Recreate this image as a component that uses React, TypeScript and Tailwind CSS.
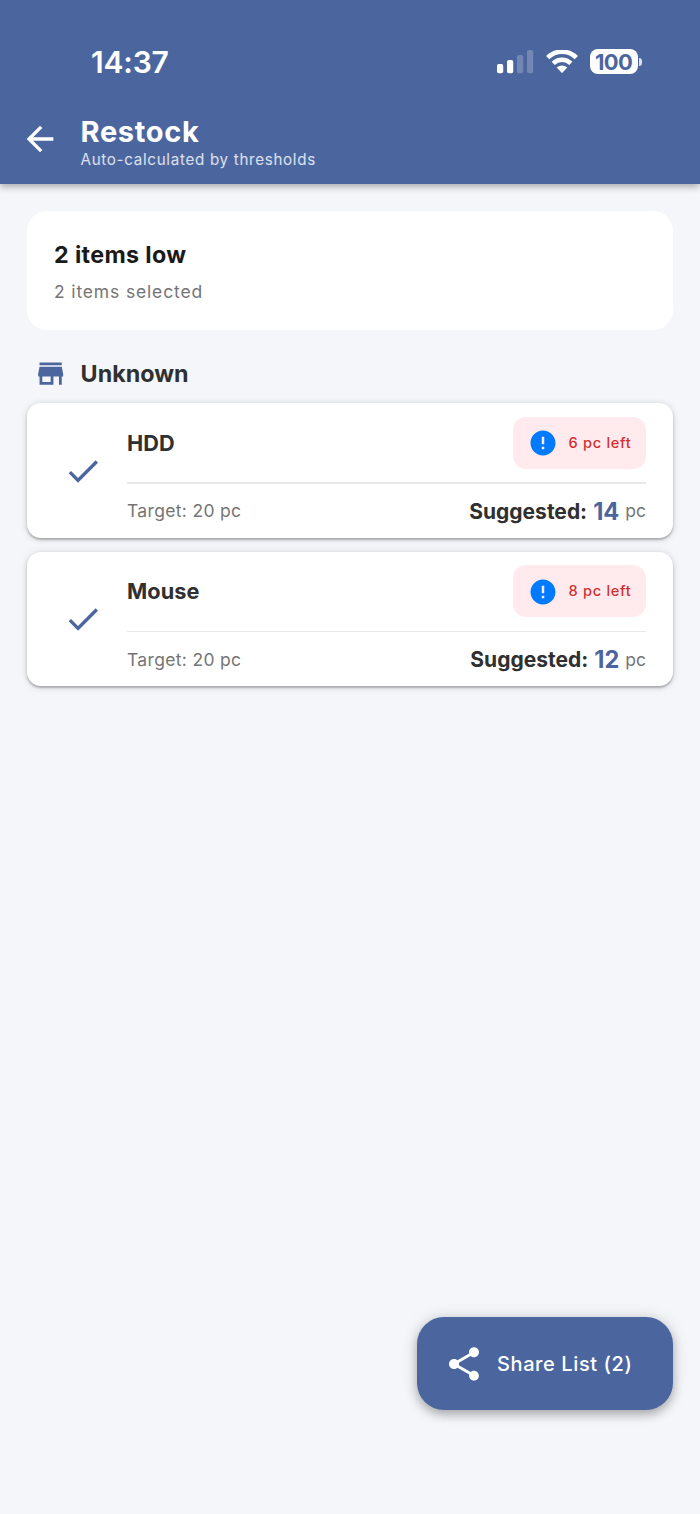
import { MdArrowBack, MdCheck, MdError, MdShare, MdStore } from "react-icons/md";

type Item = { name: string; left: number; target: number; suggested: number };

const ITEMS: Item[] = [
  { name: "HDD", left: 6, target: 20, suggested: 14 },
  { name: "Mouse", left: 8, target: 20, suggested: 12 },
];

function StatusBar() {
  return (
    <div className="flex h-[123px] items-center justify-between pl-[91px] pr-[58px] text-white">
      <span className="text-[30px] font-semibold leading-none tracking-[-0.2px]">14:37</span>
      <div className="flex items-center">
        {/* signal, two of four bars */}
        <svg width="37" height="24" viewBox="0 0 37 24" fill="currentColor">
          <rect x="0" y="14" width="6.2" height="9.3" rx="1.8" />
          <rect x="10" y="10" width="6.2" height="13.3" rx="1.8" />
          <rect x="20" y="5" width="6.2" height="18.3" rx="1.8" opacity="0.22" />
          <rect x="30" y="0" width="6.2" height="23.3" rx="1.8" opacity="0.22" />
        </svg>
        <svg className="ml-[12px]" width="32" height="24" viewBox="0 0 32 24" fill="none" stroke="currentColor" strokeWidth="4.6">
          <path d="M1.7 7.6 A20.4 20.4 0 0 1 30.3 7.6" />
          <path d="M7.2 13.4 A12.6 12.6 0 0 1 24.8 13.4" />
          <path d="M10.7 17.6 A7.6 7.6 0 0 1 21.3 17.6 L16.6 22.6 Q16 23.1 15.4 22.6 Z" fill="currentColor" stroke="none" />
        </svg>
        <div className="ml-[12px] flex h-[25px] w-[48px] items-center justify-center rounded-[8px] bg-white pr-px text-[22px] font-bold leading-none tracking-[-0.7px] text-[#4b669f]">
          100
        </div>
        <div className="ml-px h-[8px] w-[3px] rounded-r-full bg-white/80" />
      </div>
    </div>
  );
}

function ItemCard({ item }: { item: Item }) {
  return (
    <div className="flex h-[134.8px] rounded-[14px] bg-white pr-[27px] shadow-[0_2px_2px_rgba(0,0,0,0.22),0_1px_7px_rgba(0,0,0,0.18)]">
      <div className="flex w-[100px] shrink-0 items-center pl-[36.3px]">
        <MdCheck size={40} color="#4b669f" />
      </div>
      <div className="flex flex-1 flex-col">
        <div className="flex h-[79px] items-center justify-between">
          <span className="pt-px text-[21.7px] font-bold tracking-[0.1px] text-[#303030]">{item.name}</span>
          <div className="flex h-[52px] w-[133px] items-center rounded-[13px] bg-[#ffebee] pl-[15px] pt-px">
            <MdError size={30} color="#007aff" />
            <span className="ml-[10.5px] whitespace-nowrap pt-px text-[14.6px] font-medium tracking-[0.7px] text-[#d32f2f]">{item.left} pc left</span>
          </div>
        </div>
        <div className="h-[1.7px] bg-[#e8e8e8]" />
        <div className="flex h-[54px] items-center justify-between pt-px">
          <span className="text-[17.5px] tracking-[0.33px] text-[#757575]">Target: {item.target} pc</span>
          <div className="flex items-center">
            <span className="text-[21px] font-bold text-[#303030]">Suggested:</span>
            <span className="ml-[6px] text-[23.6px] font-bold text-[#4b669f]">{item.suggested}</span>
            <span className="ml-[6px] text-[17.5px] text-[#757575]">pc</span>
          </div>
        </div>
      </div>
    </div>
  );
}

export default function App() {
  return (
    <div className="relative flex h-[1514px] w-[700px] flex-col overflow-hidden bg-[#f4f6fa] font-['Inter','Liberation_Sans',sans-serif]">
      <header className="h-[183.5px] shrink-0 bg-[#4b669f] shadow-[0_3px_7px_rgba(0,0,0,0.3)]">
        <StatusBar />
        <div className="flex pl-[20px] text-white">
          <MdArrowBack size={40} className="-mt-[4px]" />
          <div className="ml-[20.5px] flex flex-col">
            <h1 className="-mt-[6px] text-[29px] font-bold leading-[30px] tracking-[0.7px]">Restock</h1>
            <p className="mt-[3.5px] text-[15.2px] leading-[18px] tracking-[0.68px] text-white/80">Auto-calculated by thresholds</p>
          </div>
        </div>
      </header>

      <main className="flex flex-col px-[27px] pt-[27.5px]">
        <section className="h-[119px] rounded-[20px] bg-white pl-[27px] pt-[30px]">
          <h2 className="text-[23.3px] font-bold leading-[28px] tracking-[0.35px] text-[#1a1a1a]">2 items low</h2>
          <p className="mt-[12px] text-[17.5px] leading-[22px] tracking-[0.85px] text-[#757575]">2 items selected</p>
        </section>

        <div className="flex h-[73.4px] items-center pl-[6.5px] pt-[14.4px]">
          <MdStore size={33.3} color="#4b669f" />
          <h3 className="ml-[13.8px] pt-px text-[23.3px] font-bold text-[#303030]">Unknown</h3>
        </div>

        <div className="flex flex-col gap-[13.4px]">
          {ITEMS.map((item) => (
            <ItemCard key={item.name} item={item} />
          ))}
        </div>
      </main>

      <button
        type="button"
        className="absolute right-[27px] bottom-[104px] flex h-[93px] w-[256px] items-center rounded-[27px] bg-[#4b669f] pl-[27px] text-white shadow-[0_5px_10px_rgba(0,0,0,0.22),0_1px_16px_rgba(0,0,0,0.16)]"
      >
        <MdShare size={40} />
        <span className="ml-[13px] whitespace-nowrap text-[20px] font-medium tracking-[0.6px]">Share List (2)</span>
      </button>
    </div>
  );
}
